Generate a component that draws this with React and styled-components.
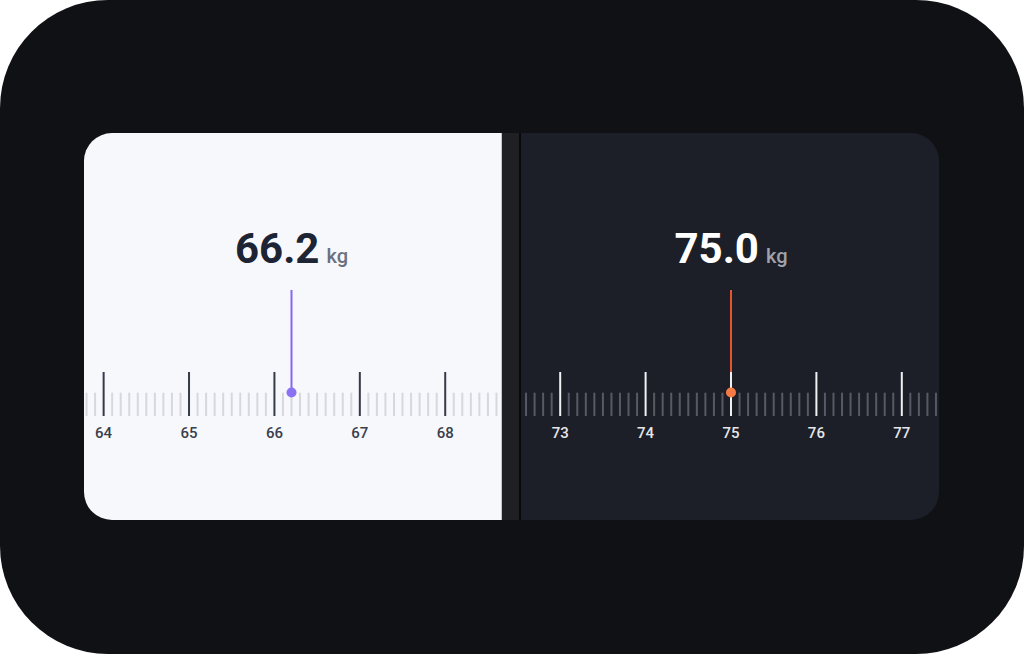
import React from 'react';
import styled, { createGlobalStyle } from 'styled-components';

const GlobalStyle = createGlobalStyle`
    html, body {
        margin: 0;
        padding: 0;
        background: #ffffff;
    }
    body {
        font-family: Roboto, "Liberation Sans", sans-serif;
    }
`

const Screen = styled.div`
    width: 1024px;
    height: 654px;
    box-sizing: border-box;
    border-radius: 108px;
    background: #101115;
    display: flex;
    align-items: flex-start;
    padding: 133px 0 0 84px;
`

const Card = styled.div`
    display: flex;
    width: 855px;
    height: 387px;
    border-radius: 28px;
    overflow: hidden;
`

const Panel = styled.div`
    flex: none;
    overflow: hidden;
    display: flex;
    flex-direction: column;
    align-items: ${p => p.$dark ? 'flex-start' : 'center'};
    padding-top: 91px;
    box-sizing: border-box;
    background: ${p => p.$dark ? '#1c1f27' : '#f7f8fc'};
    border-left: ${p => p.$dark ? '2px solid #08090b' : 'none'};
    border-right: ${p => p.$dark ? 'none' : '1px solid #c4c6cb'};
    padding-left: ${p => p.$dark ? '3px' : '0'};
    padding-right: ${p => p.$dark ? '0' : '2px'};
    width: ${p => p.$dark ? '420px' : '418px'};
`

const Divider = styled.div`
    width: 17px;
    flex: none;
    background: #1f2024;
`

const ValueRow = styled.div`
    display: flex;
    align-items: baseline;
    justify-content: center;
    gap: 7px;
    height: 50px;
    line-height: 50px;
    width: ${p => p.$width}px;
`

const Number = styled.span`
    font-size: 42px;
    font-weight: 700;
    color: ${p => p.$dark ? '#ffffff' : '#1d2433'};
`

const Unit = styled.span`
    font-size: 20px;
    font-weight: 500;
    color: ${p => p.$dark ? '#a0a3ab' : '#6b7080'};
`

const RulerSvg = styled.svg`
    display: block;
    margin-top: 16px;
    overflow: visible;
    flex: none;
`

const UNIT = 85.4;

const Ruler = ({ value, width, dark, accent, dot }) => {
    const cx = width / 2;
    const base = Math.round(value * 10);
    const from = Math.floor(base - ((cx + 12) / UNIT) * 10);
    const to = Math.ceil(base + ((width - cx + 12) / UNIT) * 10);
    const ticks = [];
    for (let i = from; i <= to; i++) {
        const x = cx + ((i - base) / 10) * UNIT;
        const major = i % 10 === 0;
        ticks.push({ i, x, major });
    }
    const majorColor = dark ? '#f1f1f3' : '#363b4a';
    const minorColor = dark ? '#575a63' : '#d6d8de';
    const labelColor = dark ? '#e6e7ea' : '#3a3f4c';

    return (
        <RulerSvg width={width} height={150} viewBox={`0 0 ${width} 150`}>
            <rect x={cx - 1} y={0} width={2} height={102} fill={accent} />
            {ticks.map(t => (
                <rect
                    key={t.i}
                    x={t.x - 1}
                    y={t.major ? 82 : 102.7}
                    width={2}
                    height={t.major ? 44 : 23.3}
                    fill={t.major ? majorColor : minorColor}
                />
            ))}
            {ticks.filter(t => t.major).map(t => (
                <text
                    key={'l' + t.i}
                    x={t.x}
                    y={147.7}
                    textAnchor="middle"
                    fontSize="15"
                    fontWeight="500"
                    fontFamily="Roboto, 'Liberation Sans', sans-serif"
                    fill={labelColor}
                >
                    {t.i / 10}
                </text>
            ))}
            <circle cx={cx} cy={102.5} r={5} fill={dot} />
        </RulerSvg>
    );
}

const WeightPanel = ({ value, dark, accent, dot, width }) => {
    return (
        <Panel $dark={dark}>
            <ValueRow $width={width}>
                <Number $dark={dark}>{value.toFixed(1)}</Number>
                <Unit $dark={dark}>kg</Unit>
            </ValueRow>
            <Ruler value={value} width={width} dark={dark} accent={accent} dot={dot} />
        </Panel>
    );
}

const App = () => {
    return (
        <>
            <GlobalStyle />
            <Screen>
                <Card>
                    <WeightPanel value={66.2} width={415} accent="#8667f0" dot="#8b72f5" />
                    <Divider />
                    <WeightPanel value={75.0} width={414} dark accent="#e0572e" dot="#f67a45" />
                </Card>
            </Screen>
        </>
    );
}

export default App;
